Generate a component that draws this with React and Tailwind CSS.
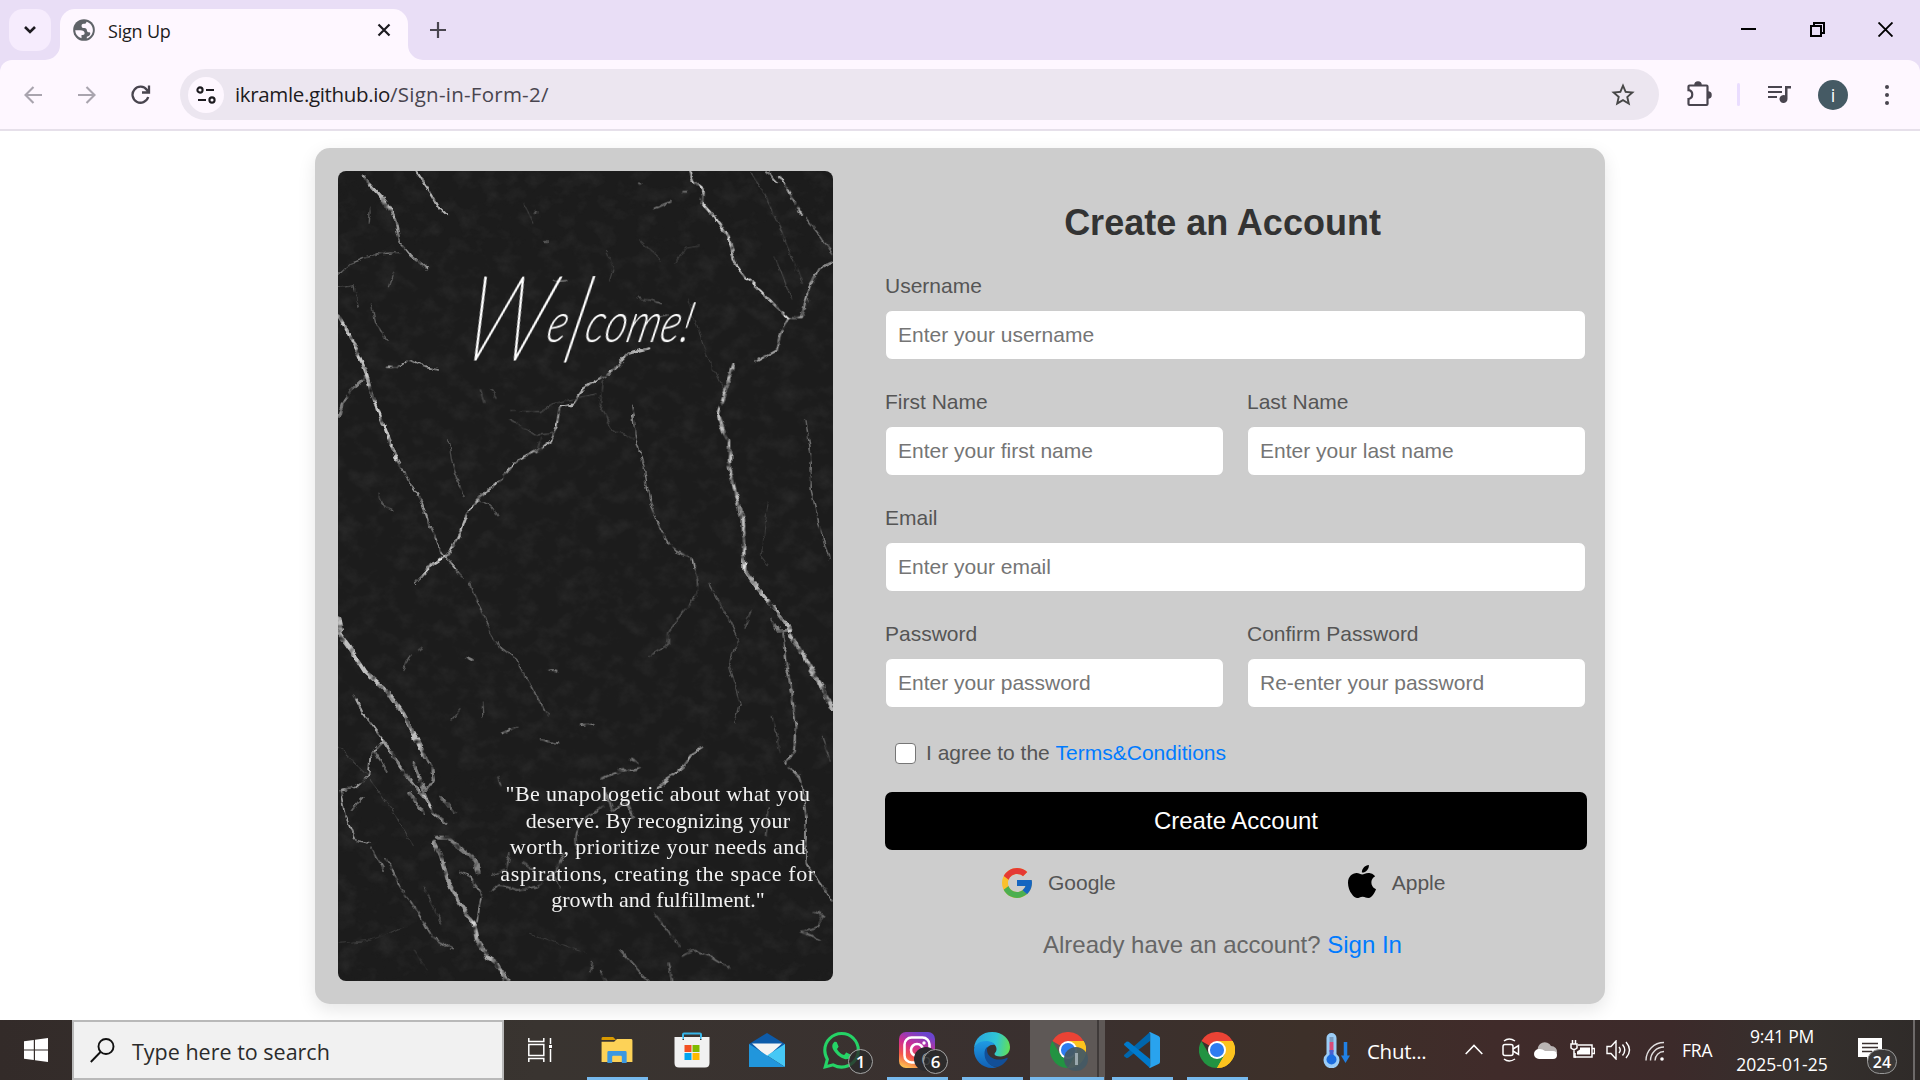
import React from "react";

const ui = "font-['Open_Sans',sans-serif]";
const arial = "font-['Liberation_Sans',sans-serif]";

/* ---------- browser chrome ---------- */

function TabStrip() {
  return (
    <div className="flex h-[60px] items-start bg-[#e9def6]">
      <div className="ml-[9px] mt-[9px] flex h-[42px] w-[42px] items-center justify-center rounded-[14px] bg-[#f6ecfd]">
        <svg width="14" height="10" viewBox="0 0 14 10" fill="none" stroke="#1d1b20" strokeWidth="2.6"><path d="M2 2l5 5 5-5" /></svg>
      </div>
      <div className="relative ml-[9px] mt-[9px] flex h-[51px] w-[348px] items-center rounded-t-[15px] bg-[#fef7ff]">
        <svg className="absolute -left-[15px] bottom-0" width="15" height="15"><path d="M15 0v15H0A15 15 0 0 0 15 0z" fill="#fef7ff" /></svg>
        <svg className="absolute -right-[15px] bottom-0" width="15" height="15"><path d="M0 0v15h15A15 15 0 0 1 0 0z" fill="#fef7ff" /></svg>
        <svg className="-mt-[9px] ml-[11px]" width="26" height="26" viewBox="0 0 24 24">
          <circle cx="12" cy="12" r="10" fill="#5f6368" />
          <path d="M3.900 12.300h4.800c2.300 0 3.900 1 3.900 2.800 0 1.500-1.400 1.500-2.900 1.600v2.900A8 8 0 0 1 3.900 12.300z" fill="#fef7ff" />
          <path d="M14.300 4.300c-.3 1.600-.9 1.900-2.600 2-1.700.1-2 .9-1.900 2.200.1 1.500 1 1.700 2.500 1.700 1.700 0 2.300.8 2.400 2.300.1 1.300.9 1.600 2.200 1.600.9 0 1 .7.8 1.700-.3 1.400-1.200 2-3.100 2.500v1.500c3.300-.9 5.600-4.200 5.600-7.800 0-3.700-2.500-6.700-5.900-7.700z" fill="#fef7ff" />
        </svg>
        <span className={"-mt-[6px] ml-[11px] text-[18px] tracking-[-0.200px] text-[#1d1b20] " + ui}>Sign Up</span>
        <svg className="-mt-[9px] ml-auto mr-[17px]" width="14" height="14" viewBox="0 0 14 14" stroke="#1d1b20" strokeWidth="2.2"><path d="M1.500 1.500l11 11M12.500 1.500l-11 11" /></svg>
      </div>
      <svg className="ml-[22px] mt-[22px]" width="16" height="16" viewBox="0 0 16 16" stroke="#49454f" strokeWidth="2.2"><path d="M8 0v16M0 8h16" /></svg>
      <div className="ml-auto mr-[27px] mt-[22px] flex gap-[53.500px]">
        <svg width="15" height="15" fill="none" stroke="#000" strokeWidth="2"><path d="M0 7h15" /></svg>
        <svg width="15" height="15" fill="none" stroke="#000" strokeWidth="2"><path d="M1 4h10v10H1zM4 4V1h10v10h-3" /></svg>
        <svg width="15" height="15" fill="none" stroke="#000" strokeWidth="1.900"><path d="M.5.5l14 14M14.500.5l-14 14" /></svg>
      </div>
    </div>
  );
}

function Toolbar() {
  return (
    <div className="bg-[#e9def6]">
      <div className="flex h-[71px] items-center rounded-t-[12px] border-b-2 border-[#e6e0ea] bg-[#fef7ff]">
        <svg className="ml-[24px]" width="18" height="18" fill="none" stroke="#a9a4ae" strokeWidth="2.100"><path d="M18 9H2M9.500 1L1.500 9l8 8" /></svg>
        <svg className="ml-[36px]" width="18" height="18" fill="none" stroke="#a9a4ae" strokeWidth="2.100"><path d="M0 9h16M8.500 1l8 8-8 8" /></svg>
        <svg className="ml-[35px]" width="20" height="20" viewBox="0 0 20 20" fill="none" stroke="#49454f" strokeWidth="2.300"><path d="M17.200 12A8 8 0 1 1 16 5l2 2.500M18 0.500V7.500h-7" /></svg>
        <div className="ml-[29px] flex h-[51px] w-[1479px] items-center rounded-full bg-[#ece6f0]">
          <div className="ml-[8px] flex h-[36px] w-[36px] items-center justify-center rounded-full bg-[#fef7ff]">
            <svg width="20" height="18" viewBox="0 0 20 18" fill="none" stroke="#1d1b20" strokeWidth="2.100"><circle cx="4" cy="4" r="2.600" /><path d="M10 4h8M2 14h8" /><circle cx="16" cy="14" r="2.600" /></svg>
          </div>
          <span className={"ml-[11px] text-[20.500px] tracking-[-0.350px] text-[#1d1b20] " + ui}>ikramle.github.io<span className="tracking-[0.250px] text-[#49454f]">/Sign-in-Form-2/</span></span>
          <svg className="ml-auto mr-[22px]" width="28" height="28" viewBox="0 0 24 24" fill="#474747"><path d="M22 9.240l-7.190-.62L12 2 9.190 8.630 2 9.240l5.460 4.730L5.820 21 12 17.270 18.180 21l-1.630-7.030L22 9.240zM12 15.400l-3.760 2.270 1-4.280-3.320-2.880 4.380-.38L12 6.100l1.710 4.040 4.380.38-3.320 2.880 1 4.280L12 15.400z" /></svg>
        </div>
        <svg className="-mt-[2px] ml-[27px]" width="26" height="26" viewBox="0 0 26 26" fill="none" stroke="#49454f" strokeWidth="2.200">
          <path d="M3.500 4.500h17a1 1 0 0 1 1 1v17.500a1 1 0 0 1-1 1h-17a1 1 0 0 1-1-1V18c5-1 5-8 0-8.800V5.500a1 1 0 0 1 1-1z" />
          <path d="M9 4a3 3 0 0 1 6 0M22 11a3 3 0 0 1 0 6" strokeWidth="1.500" fill="#49454f" />
        </svg>
        <div className="ml-[25px] h-[23px] w-[3px] rounded bg-[#eaddff]" />
        <svg className="-mt-[2px] ml-[26px]" width="27" height="22" viewBox="0 0 27 22" fill="#49454f"><path d="M2 3h14v2H2zM2 8h14v2H2zM2 13h9v2H2zM19 3h6v2.500h-3.500V16a4 4 0 1 1-2.500-3.700z" /></svg>
        <div className={"ml-[25px] flex h-[30px] w-[30px] items-center justify-center rounded-full bg-[#455a64] text-[18px] leading-none text-white " + ui}>i</div>
        <div className="ml-[37px] flex flex-col gap-[4px]">
          <div className="h-[4px] w-[4px] rounded-full bg-[#49454f]" />
          <div className="h-[4px] w-[4px] rounded-full bg-[#49454f]" />
          <div className="h-[4px] w-[4px] rounded-full bg-[#49454f]" />
        </div>
      </div>
    </div>
  );
}

/* ---------- marble panel ---------- */

// Veins: [path, stroke width, opacity]
const upperVeins = [
  ["M152 108L180 140L215 180L245 228", 10, 0.6],
  ["M245 228L252 262L262 310L290 345L340 388", 6, 0.5],
  ["M308 94L345 150L372 200L395 222", 6, 0.6],
  ["M82 405L120 370L190 342L262 338", 4, 0.32],
  ["M82 442L128 434L140 500M178 490L190 550L225 600", 4, 0.25],
  ["M175 205L172 250M240 400L228 440", 4, 0.25],
  ["M82 525L118 590L160 690L180 765L212 850L250 955", 9, 0.68],
  ["M250 955L285 1020L325 1085L350 1165L388 1245L420 1285", 5, 0.48],
  ["M225 682L255 682L290 658L330 680L372 690", 5, 0.5],
  ["M82 830L95 790L120 750L160 712", 8, 0.4],
  ["M985 625L925 640L880 690L795 745L765 790L725 800L716 860", 6, 0.6],
  ["M716 860L700 905L660 932L592 968L555 1020L495 1070L462 1110L440 1170L400 1245L335 1288", 6, 0.6],
  ["M1105 94L1112 125L1140 150L1138 190L1175 232L1215 290L1235 370L1265 410L1330 475L1390 535", 7, 0.72],
  ["M1390 535L1425 535L1438 490L1452 440L1480 385L1518 368", 6, 0.5],
  ["M1390 535L1365 580L1355 630L1300 662", 6, 0.5],
  ["M1325 94L1355 130M1362 108L1395 165L1428 228", 6, 0.6],
  ["M1440 235L1475 280L1518 340", 4, 0.4],
  ["M1280 100L1320 160L1370 275L1430 430M1350 350L1400 480", 3, 0.2],
  ["M1228 675L1215 720L1200 770L1185 820L1200 870L1218 905L1218 980L1235 1060L1255 1140L1262 1290", 9, 0.65],
  ["M935 800L945 895L970 980L985 1075L1010 1150L1040 1210L1065 1235L1105 1250L1112 1285", 4, 0.4],
  ["M1440 845L1455 950L1455 1050L1480 1160L1508 1260", 4, 0.35],
  ["M580 815L670 815L710 790L830 762M850 720L840 790L880 870L940 895", 3, 0.22],
  ["M860 330L880 385L870 420M1060 370L1090 325L1130 318M620 190L650 250M960 300L1020 360", 3, 0.16],
  ["M580 840L660 885L710 880M670 895L660 930M495 750L505 785M525 750L540 775", 4, 0.2],
  ["M200 1060L215 1100L240 1112M490 1080L530 1100L545 1130M400 900L420 1000L450 1070", 4, 0.25],
  ["M1100 480L1150 640L1200 750M1330 1085L1310 1250L1330 1275", 3, 0.12],
  ["M1000 205L1045 185M710 425L745 422M1080 155L1095 155M955 130L960 132M652 215L658 217M682 303L688 303", 5, 0.35],
  ["M950 475L985 480L1020 490M1000 530L1040 525M935 800L938 830", 4, 0.3],
];

const lowerVeins = [
  ["M380 0L345 25L305 68", 6, 0.7],
  ["M82 175L90 215M82 215L120 270L160 335L215 385L270 460L300 520L335 590", 12, 0.65],
  ["M335 590L355 625L360 660L340 690L310 650", 6, 0.4],
  ["M130 410L155 460L210 535", 6, 0.55],
  ["M210 535L250 600L290 660L340 720L360 760L395 790", 8, 0.5],
  ["M300 610L330 690L350 740M380 710L420 760M290 700L330 760", 9, 0.38],
  ["M210 545L175 590L170 650L130 685L88 692L100 760L135 845L175 852", 5, 0.5],
  ["M190 580L225 640M150 715L120 750", 5, 0.35],
  ["M175 660L250 770L300 860M80 560L170 650", 3, 0.15],
  ["M365 830L400 830L440 870L480 900L490 940", 11, 0.4],
  ["M360 845L380 890L400 960L435 1030L475 1090", 11, 0.5],
  ["M435 935L470 955L498 1000L485 1085", 5, 0.4],
  ["M475 1090L485 1140L520 1195L550 1220L572 1262", 13, 0.6],
  ["M180 865L215 930M220 895L260 980L310 1050L355 1130L410 1165", 5, 0.36],
  ["M330 980L360 1040L380 1090", 4, 0.2],
  ["M400 0L440 50M465 65L485 120L505 160L525 220L550 260L600 298L640 370L690 470", 4, 0.33],
  ["M1108 0L1125 60L1125 105L1080 160L1040 220L1040 250L980 290", 5, 0.22],
  ["M1160 70L1210 170L1245 240L1215 320L1235 380L1248 430L1230 490", 4, 0.22],
  ["M1260 0L1262 30L1300 85L1345 140L1395 212", 11, 0.62],
  ["M1395 225L1440 300L1480 370L1518 445", 11, 0.6],
  ["M1395 212L1360 215L1340 180", 6, 0.4],
  ["M1372 220L1380 300L1400 400L1410 500L1405 575L1378 610", 6, 0.45],
  ["M1378 610L1420 650L1432 700L1440 770L1440 910L1480 965L1518 1020", 5, 0.45],
  ["M1280 155L1260 205M1330 740L1325 830M1345 470L1365 580M1485 530L1510 600", 4, 0.22],
  ["M1135 565L1110 580L1085 620L1050 650L1005 682", 6, 0.55],
  ["M850 655L900 632L960 625M930 600L950 610M860 700L875 750L920 730L940 770", 7, 0.35],
  ["M850 740L780 790L772 830L775 880M735 880L710 940L660 980L600 990L550 975L525 995", 5, 0.3],
  ["M580 880L570 930L530 945M620 905L650 930M705 940L725 985M545 650L555 680", 5, 0.25],
  ["M695 330L715 332M790 495L820 490M560 520L600 500M670 540L720 550M450 290L470 300", 6, 0.4],
  ["M290 285L270 330M325 262L315 270M410 480L435 450M500 430L502 465", 4, 0.25],
  ["M1465 1055L1490 1065L1475 1100L1425 1115L1480 1140", 6, 0.3],
  ["M1082 1185L1110 1170L1160 1190L1215 1225M1040 1210L1050 1262M1000 1060L1075 1160", 5, 0.3],
  ["M820 1205L815 1235M845 1235L860 1262M900 1170L980 1262", 5, 0.3],
  ["M85 1150L180 1140L280 1100M300 1170L340 1230M640 1120L800 1180", 3, 0.12],
];

function MarblePanel() {
  const draw = (list) =>
    list.map(([d, w, o], i) => (
      <path key={i} d={d} stroke="#ededed" strokeWidth={w * 1.08} opacity={Math.min(1, o * 1.2)} />
    ));
  return (
    <div className="relative h-[810px] w-[495px] shrink-0 overflow-hidden rounded-[8px] bg-[#1c1c1c]">
      <svg className="absolute inset-0" width="495" height="810" viewBox="0 0 495 810" fill="none">
        <defs>
          <filter id="rough" x="0" y="0" width="495" height="810" filterUnits="userSpaceOnUse" colorInterpolationFilters="sRGB">
            <feTurbulence type="fractalNoise" baseFrequency="0.1" numOctaves="3" seed="4" result="n" />
            <feDisplacementMap in="SourceGraphic" in2="n" scale="6" xChannelSelector="R" yChannelSelector="G" result="d" />
            <feTurbulence type="fractalNoise" baseFrequency="0.13" numOctaves="2" seed="9" result="m" />
            <feColorMatrix in="m" type="matrix" values="0 0 0 0 1  0 0 0 0 1  0 0 0 0 1  2.400 0 0 0 -0.400" result="mask" />
            <feComposite in="d" in2="mask" operator="in" />
            <feGaussianBlur stdDeviation="0.6" />
          </filter>
          <filter id="grain" x="0" y="0" width="100%" height="100%" colorInterpolationFilters="sRGB">
            <feTurbulence type="fractalNoise" baseFrequency="0.05 0.06" numOctaves="5" seed="21" />
            <feColorMatrix type="matrix" values="0 0 0 0 0.600  0 0 0 0 0.600  0 0 0 0 0.600  1.600 0 0 0 -0.720" />
          </filter>
        </defs>
        <rect width="495" height="810" filter="url(#grain)" opacity="0.13" />
        <g filter="url(#rough)" strokeLinecap="round" strokeLinejoin="round">
          <g transform="translate(-28 -31) scale(.3444 .3333)">{draw(upperVeins)}</g>
          <g transform="translate(-28 389) scale(.3444 .3333)">{draw(lowerVeins)}</g>
        </g>
      </svg>
      <div className="absolute left-[130px] top-[95px] origin-left scale-x-[0.76] -skew-x-[18deg] whitespace-nowrap font-['Lato',cursive] text-[55px] font-light italic leading-[100px] tracking-[1px] text-white">
        <span className="align-[-18px] text-[116px] font-thin [-webkit-text-stroke:1.8px_white]">W</span>e<span className="align-[-20px] text-[116px] font-thin [-webkit-text-stroke:1.8px_white]">l</span>come!
      </div>
      <div className="absolute left-[155px] top-[610px] w-[330px] text-center font-['Liberation_Serif',serif] text-[22px] leading-[26.600px] text-[#f2f2f2]">
        <div className="whitespace-nowrap tracking-[0.360px]">"Be unapologetic about what you</div>
        <div className="whitespace-nowrap tracking-[0.200px]">deserve. By recognizing your</div>
        <div className="whitespace-nowrap tracking-[0.460px]">worth, prioritize your needs and</div>
        <div className="whitespace-nowrap tracking-[0.580px]">aspirations, creating the space for</div>
        <div className="whitespace-nowrap">growth and fulfillment."</div>
      </div>
    </div>
  );
}

/* ---------- form ---------- */

function Field({ label, placeholder, type = "text" }) {
  return (
    <label className="flex min-w-0 flex-1 flex-col text-[21px] leading-[24px] text-[#555]">
      {label}
      <input type={type} placeholder={placeholder} className="mt-[12px] h-[50px] w-full rounded-[7px] border border-[#ccc] bg-white px-[12px] text-[21px] placeholder:text-[#757575]" />
    </label>
  );
}

function SignUpForm() {
  return (
    <form className="ml-[52px] flex w-[702px] shrink-0 flex-col">
      <h1 className="mt-[31px] w-[675px] text-center text-[36px] font-bold leading-[42px] text-[#333]">Create an Account</h1>
      <div className="mt-[30px] flex w-[701px] flex-col gap-[30px]">
        <Field label="Username" placeholder="Enter your username" />
        <div className="flex gap-[23px]">
          <Field label="First Name" placeholder="Enter your first name" />
          <Field label="Last Name" placeholder="Enter your last name" />
        </div>
        <Field label="Email" placeholder="Enter your email" />
        <div className="flex gap-[23px]">
          <Field label="Password" placeholder="Enter your password" type="password" />
          <Field label="Confirm Password" placeholder="Re-enter your password" type="password" />
        </div>
      </div>
      <label className="mt-[33px] flex h-[24px] items-center pl-[10px] text-[21px] leading-[24px] text-[#555]">
        <span className="mr-[10px] h-[21px] w-[21px] rounded-[4px] border-[1.500px] border-[#767676] bg-white" />
        I agree to the&nbsp;<a className="text-[#007bff]">Terms&amp;Conditions</a>
      </label>
      <button type="button" className="mt-[27px] h-[58px] w-[702px] rounded-[7px] bg-black text-[24px] text-white">Create Account</button>
      <div className="mt-[15px] flex h-[36px] w-[702px] items-center text-[21px] text-[#555]">
        <svg className="ml-[114px]" width="36" height="36" viewBox="0 0 48 48">
          <path fill="#fbc02d" d="M43.600 20.100H42V20H24v8h11.300C33.700 32.700 29.200 36 24 36c-6.600 0-12-5.400-12-12s5.400-12 12-12c3.100 0 5.900 1.200 8 3l5.700-5.700C34 6.100 29.300 4 24 4 13 4 4 13 4 24s9 20 20 20 20-9 20-20c0-1.300-.1-2.600-.4-3.900z" />
          <path fill="#e53935" d="M6.300 14.700l6.600 4.800C14.700 15.100 19 12 24 12c3.100 0 5.900 1.200 8 3l5.700-5.700C34 6.100 29.300 4 24 4 16.300 4 9.700 8.300 6.300 14.700z" />
          <path fill="#4caf50" d="M24 44c5.200 0 9.900-2 13.400-5.200l-6.200-5.200C29.200 35.100 26.700 36 24 36c-5.200 0-9.600-3.300-11.300-7.900l-6.500 5C9.500 39.600 16.200 44 24 44z" />
          <path fill="#1565c0" d="M43.600 20.100H24v8h11.300c-.8 2.200-2.200 4.200-4.100 5.600l6.200 5.200C37 39.200 44 34 44 24c0-1.300-.1-2.600-.4-3.900z" />
        </svg>
        <span className="ml-[13px]">Google</span>
        <svg className="mb-[3px] ml-[232px]" width="28" height="33" viewBox="0 0 814 1000" preserveAspectRatio="none"><path d="M788.100 340.900c-5.800 4.500-108.200 62.200-108.200 190.500 0 148.400 130.300 200.900 134.200 202.200-.6 3.200-20.700 71.900-68.700 141.900-42.800 61.600-87.500 123.100-155.500 123.100s-85.500-39.500-164-39.500c-76.500 0-103.700 40.800-165.900 40.800s-105.600-57-155.500-127C46.700 790.700 0 663 0 541.800c0-194.400 126.400-297.500 250.800-297.500 66.100 0 121.200 43.400 162.700 43.400 39.500 0 101.100-46 176.300-46 28.500 0 130.900 2.600 198.300 99.200zM554.100 159.400c31.100-36.900 53.100-88.100 53.100-139.300 0-7.100-.6-14.300-1.900-20.100-50.600 1.900-110.800 33.700-147.100 75.800-28.500 32.400-55.100 83.600-55.100 135.500 0 7.800 1.300 15.600 1.900 18.100 3.200.6 8.400 1.300 13.600 1.300 45.400 0 102.500-30.400 135.500-71.300z" /></svg>
        <span className="ml-[16px]">Apple</span>
      </div>
      <p className="mt-[30px] w-[675px] text-center text-[24px] leading-[28px] text-[#666]">Already have an account? <a className="text-[#007bff]">Sign In</a></p>
    </form>
  );
}

/* ---------- taskbar ---------- */

function ChromeIcon() {
  return (
    <svg width="36" height="36" viewBox="0 0 48 48">
      <path d="M24 24L3.200 12A24 24 0 0 1 44.800 12z" fill="#ea4335" />
      <path d="M24 24L44.800 12A24 24 0 0 1 24 48z" fill="#fcc31e" />
      <path d="M3.200 12A24 24 0 0 0 24 48L34.400 30 24 24 13.600 30z" fill="#229342" />
      <path d="M24 12h20.800A24 24 0 0 1 24 48l10.400-18z" fill="#fcc31e" />
      <circle cx="24" cy="24" r="12" fill="#fff" /><circle cx="24" cy="24" r="9.400" fill="#2e7cf0" />
    </svg>
  );
}

function Badge({ children, className }) {
  return <div className={"absolute flex h-[25px] w-[25px] items-center justify-center rounded-full border border-[#a5a5a5] bg-[#2b2a2a]/80 text-[17px] font-semibold leading-none text-white " + className + " " + ui}>{children}</div>;
}

function Slot({ open, active, children }) {
  return (
    <div className={"relative flex h-[60px] w-[75px] items-center justify-center " + (active ? "bg-[#5e5856]" : "")}>
      {children}
      {open && <div className={"absolute bottom-0 h-[3px] bg-[#76b9ed] " + (active ? "left-0 w-[74px]" : "left-[8px] w-[61px]")} />}
      {active && <div className="absolute right-[6px] top-0 h-[57px] w-[2px] bg-[#3f3a39]" />}
    </div>
  );
}

function Taskbar() {
  return (
    <div className="flex h-[60px] items-center bg-[linear-gradient(90deg,#332b29_0%,#393430_28%,#3a302f_55%,#3d3029_68%,#402b2a_78%,#3c2a2a_87%,#35302d_94%,#2f2b29_100%)] text-white">
      <svg className="ml-[24px]" width="24" height="24" viewBox="0 0 24 24" fill="#fff"><path d="M0 3.300L9.800 2v9.400H0zM11 1.800L24 0v11.400H11zM0 12.600h9.800V22L0 20.700zM11 12.600h13V24l-13-1.800z" /></svg>
      <div className="ml-[24px] flex h-[60px] w-[432px] items-center border-2 border-[#b9b9b9] bg-[#f1f1f1]">
        <svg className="ml-[16px]" width="25" height="25" fill="none" stroke="#111" strokeWidth="1.900"><circle cx="16" cy="8.500" r="7.500" /><path d="M10.500 14L.8 24" /></svg>
        <span className={"ml-[17px] mt-[4px] text-[21.500px] text-[#2b2b2b] " + ui}>Type here to search</span>
      </div>
      <svg className="ml-[24px]" width="24" height="24" fill="none" stroke="#fff" strokeWidth="1.500"><path d="M.8 0v3.500h15V0M.8 6.500h15v11h-15zM.8 24v-3.500h15V24M22.500 0v6M22.500 11v13" /><path d="M21 7h3v3h-3z" fill="#fff" stroke="none" /></svg>
      <div className="ml-[27px] flex">
        <Slot open>
          <svg width="32" height="27" viewBox="0 0 32 28" className="ml-[1px] mt-[1px]"><path d="M0 1.500Q0 0 1.500 0H12l3 3H0z" fill="#d99a00" /><path d="M0 5h13l3-3h14.500Q32 2 32 3.500V26H0z" fill="#fdd257" /><path d="M6 27V16q0-1.500 1.500-1.500h17Q26 14.500 26 16v11h-5v-6.500q0-1-1-1h-8q-1 0-1 1V27z" fill="#3b98e0" /></svg>
        </Slot>
        <Slot>
          <svg width="36" height="36" viewBox="0 0 36 36"><path d="M9 7V2.500Q9 1.500 10 1.500h16Q27 1.500 27 2.500V7" fill="none" stroke="#36b5e8" strokeWidth="2" /><path d="M.5 5h8v3h1.500V5h16v3h1.500V5h8v26q0 4.500-4.500 4.500H5Q.5 35.500.5 31z" fill="#f1f1f1" /><path d="M10.500 13h7v7h-7z" fill="#f25022" /><path d="M18.500 13h7v7h-7z" fill="#7fba00" /><path d="M10.500 21h7v7h-7z" fill="#00a4ef" /><path d="M18.500 21h7v7h-7z" fill="#ffb900" /></svg>
        </Slot>
        <Slot>
          <svg width="36" height="34" viewBox="0 0 36 34"><path d="M0 11L18 0l18 11v8H0z" fill="#0d5ba9" /><path d="M3 10.500h30L18 24z" fill="#f3f3f3" /><path d="M36 11v23L18 22.500z" fill="#46c8f5" /><path d="M0 34V11l36 23z" fill="#2196dc" /></svg>
        </Slot>
        <Slot>
          <svg width="37" height="37" viewBox="0 0 24 24" fill="#25d366"><path d="M17.472 14.382c-.297-.149-1.758-.867-2.030-.967-.273-.099-.471-.148-.67.150-.197.297-.767.966-.94 1.164-.173.199-.347.223-.644.075-.297-.150-1.255-.463-2.390-1.475-.883-.788-1.480-1.761-1.653-2.059-.173-.297-.018-.458.130-.606.134-.133.298-.347.446-.520.149-.174.198-.298.298-.497.099-.198.050-.371-.025-.520-.075-.149-.669-1.612-.916-2.207-.242-.579-.487-.5-.669-.510-.173-.008-.371-.010-.570-.010-.198 0-.520.074-.792.372-.272.297-1.040 1.016-1.040 2.479 0 1.462 1.065 2.875 1.213 3.074.149.198 2.096 3.200 5.077 4.487.709.306 1.262.489 1.694.625.712.227 1.360.195 1.871.118.571-.085 1.758-.719 2.006-1.413.248-.694.248-1.289.173-1.413-.074-.124-.272-.198-.570-.347m-5.421 7.403a9.870 9.870 0 0 1-5.031-1.378l-.361-.214-3.741.982.998-3.648-.235-.374a9.860 9.860 0 0 1-1.510-5.260C2.167 6.443 6.602 2.009 12.055 2.009a9.825 9.825 0 0 1 9.880 9.889c-.003 5.450-4.437 9.884-9.885 9.884m8.413-18.297A11.815 11.815 0 0 0 12.050 0C5.495 0 .160 5.335.157 11.892c0 2.096.547 4.142 1.588 5.945L.057 24l6.305-1.654a11.882 11.882 0 0 0 5.683 1.448h.005c6.554 0 11.890-5.335 11.893-11.893a11.821 11.821 0 0 0-3.480-8.413z" /></svg>
          <Badge className="left-[44px] top-[29px]">1</Badge>
        </Slot>
        <Slot open>
          <svg width="36" height="36" viewBox="0 0 36 36"><defs><linearGradient id="ig" x1="0.200" y1="1" x2="0.600" y2="0"><stop offset="0" stopColor="#fdc351" /><stop offset=".3" stopColor="#f4564a" /><stop offset=".6" stopColor="#cf2e92" /><stop offset="1" stopColor="#6a45cf" /></linearGradient></defs><rect width="36" height="36" rx="7" fill="url(#ig)" /><g fill="none" stroke="#fff" strokeWidth="2.600"><rect x="5.500" y="5.500" width="25" height="25" rx="7" /><circle cx="18" cy="18" r="6" /></g><circle cx="25" cy="11" r="1.700" fill="#fff" /></svg>
          <div className={"absolute left-[35px] top-[27px] flex h-[24px] w-[24px] items-center justify-center rounded-full bg-[#2b2a2d] text-[17px] text-[#999] " + ui}>6</div>
          <Badge className="left-[44px] top-[29px]">6</Badge>
        </Slot>
        <Slot open>
          <svg width="36" height="36" viewBox="0 0 36 36"><defs><linearGradient id="e1" x1="0" y1=".4" x2="1" y2=".5"><stop offset="0" stopColor="#2aa5e0" /><stop offset=".6" stopColor="#2fc6d6" /><stop offset="1" stopColor="#62df57" /></linearGradient><linearGradient id="e2" x1="0" y1="0" x2="0" y2="1"><stop offset="0" stopColor="#1f9be4" /><stop offset="1" stopColor="#1160b5" /></linearGradient></defs><path d="M0 16C1 6 8.500 0 18 0c11 0 18 7.500 18 15 0 6-4.500 9.500-9.500 9.500-4 0-6-1.300-6-2.500 0-1 2-1.800 2-5 0-4-4-7.300-9.500-7.300C6 9.700 2 13 0 16z" fill="url(#e1)" /><path d="M0 18c0-5 5-9 12-9 4 0 7.500 1.500 9.300 4-5.300-1-10.300 2.500-10.300 9 0 7 6 13 12 13-1.500.6-3 1-5 1C8 36 0 28 0 18z" fill="url(#e2)" /><path d="M13.500 14.500C11 17 10.500 19 10.500 21.500c0 8 6 13.500 13 13.500 4-1 8-4.500 10-8 .5-1-.3-1.500-1-1-9 4-19.500 0-19.500-8 0-1.500.2-2.500.5-3.500z" fill="#124f98" /></svg>
        </Slot>
        <div className="ml-[1px] mr-[-1px]">
          <Slot open active>
            <ChromeIcon />
            <div className="absolute left-[34px] top-[27px] flex h-[24px] w-[24px] items-center justify-center rounded-full bg-[#455a64]/95">
              <div className="h-[12px] w-[3px] bg-[#9aa8ae]" />
            </div>
          </Slot>
        </div>
        <Slot open>
          <svg width="36" height="36" viewBox="0 0 36 36"><path d="M26 0v9L4.500 25.500 2.800 26.300.4 24.500q-.8-.9 0-1.700z" fill="#0066ad" /><path d="M.4 11.500l2.400-2 1.800.3L26 27v9L.4 13.200q-.8-.8 0-1.700z" fill="#007acc" /><path d="M26 0l8.500 4Q36 4.800 36 6v24q0 1.300-1.500 2L26 36l-.8-.2q1-.5 1-2V2q0-1.300-1-1.800z" fill="#29a3ee" /></svg>
        </Slot>
        <Slot open><ChromeIcon /></Slot>
      </div>
      <svg className="ml-[69px]" width="28" height="35" viewBox="0 0 28 35"><path d="M3.500 5a5 5 0 0 1 10 0v16a8 8 0 1 1-10 0z" fill="#9bcdf7" /><path d="M8.500 4v5" stroke="#7a9cc0" strokeWidth="4" /><path d="M8.500 9v10" stroke="#d94a78" strokeWidth="4" /><path d="M8.500 17v8" stroke="#4a60d0" strokeWidth="4" /><circle cx="8.500" cy="26.500" r="5" fill="#1b6de0" /><path d="M22.500 9v17" stroke="#2080e4" strokeWidth="3.500" /><path d="M18 22.500h9L22.500 30z" fill="#2080e4" /></svg>
      <span className={"ml-[16px] mt-[3px] w-[60px] whitespace-nowrap text-[20.500px] tracking-[-0.300px] " + ui}>Chut...</span>
      <svg className="-mt-[1px] ml-[38px]" width="18" height="11" fill="none" stroke="#fff" strokeWidth="1.600"><path d="M.7 10L9 1.500 17.300 10" /></svg>
      <svg className="ml-[19px]" width="18" height="24" fill="none" stroke="#fff" strokeWidth="1.500"><rect x="1" y="6.500" width="10" height="11" rx="2" /><path d="M11 11l5.500-3.500v9L11 13M2 3q5-4 11 0M2 21q5 4 11 0" /></svg>
      <svg className="ml-[14px]" width="24" height="17" viewBox="0 0 24 17"><path d="M4 9a7 7 0 0 1 13-5 6 6 0 0 1 6 7z" fill="#b9b4b3" /><path d="M5 17a5 5 0 0 1 0-10q3-.5 6 2l8 0a4 4 0 0 1 0 8z" fill="#fff" /></svg>
      <svg className="ml-[12px]" width="25" height="20" fill="none" stroke="#fff" strokeWidth="1.500"><path d="M8 5h14v12H5v-4M22.500 8.500h2v5h-2" /><path d="M10 7.500h10v7H7v-3l3-2z" fill="#fff" stroke="none" /><path d="M1 4h6v4q-3 3-6 0zM2.500 4V0M5.500 4V0M4 9.500V17h2" /></svg>
      <svg className="ml-[11px]" width="25" height="20" fill="none" stroke="#fff" strokeWidth="1.400"><path d="M1 6.500h4L10 1v18l-5-5.500H1zM13 7q2.500 3 0 6M16.500 4.500q4.500 5.500 0 11M20 2q7 8 0 16" /></svg>
      <svg className="ml-[14px] mt-[2px]" width="20" height="20" fill="none" stroke="#fff" strokeWidth="1.400"><path d="M1 19.500A18 18 0 0 1 19 1.500M5.500 19.500A13.500 13.500 0 0 1 19 6M10 19.500a9 9 0 0 1 9-9" opacity=".85" /><circle cx="17" cy="18" r="1.800" fill="#fff" stroke="none" /></svg>
      <span className={"ml-[17px] w-[35px] text-[17.500px] tracking-[-0.200px] " + ui}>FRA</span>
      <div className={"ml-[13px] w-[104px] whitespace-nowrap text-center text-[17.500px] leading-[28px] " + ui}>
        <div className="tracking-[-0.200px]">9:41 PM</div>
        <div>2025-01-25</div>
      </div>
      <div className="relative ml-[24px] h-[60px] w-[40px]">
        <svg className="absolute left-0 top-[18px]" width="24" height="25"><path d="M0 0h24v19h-9l-6 5v-5H0z" fill="#fff" /><path d="M4 5.500h16M4 9.500h16M4 13.500h10" stroke="#3a302f" strokeWidth="1.500" /></svg>
        <div className={"absolute left-[9px] top-[29px] flex h-[25px] w-[30px] items-center justify-center rounded-full border border-[#999] bg-[#3b3938] text-[16px] font-semibold leading-none " + ui}>24</div>
      </div>
      <div className="ml-auto mr-[5px] h-[60px] w-[2px] bg-[#6d6a69]" />
    </div>
  );
}

export default function App() {
  return (
    <div className="flex h-[1080px] w-[1920px] flex-col overflow-hidden bg-white">
      <TabStrip />
      <Toolbar />
      <main className={"flex h-[889px] justify-center overflow-hidden bg-white pt-[17px] " + arial}>
        <div className="flex h-[856px] w-[1290px] rounded-[15px] bg-[#cdcdcd] p-[23px] shadow-[0_6px_18px_rgba(0,0,0,0.1)]">
          <MarblePanel />
          <SignUpForm />
        </div>
      </main>
      <Taskbar />
    </div>
  );
}
